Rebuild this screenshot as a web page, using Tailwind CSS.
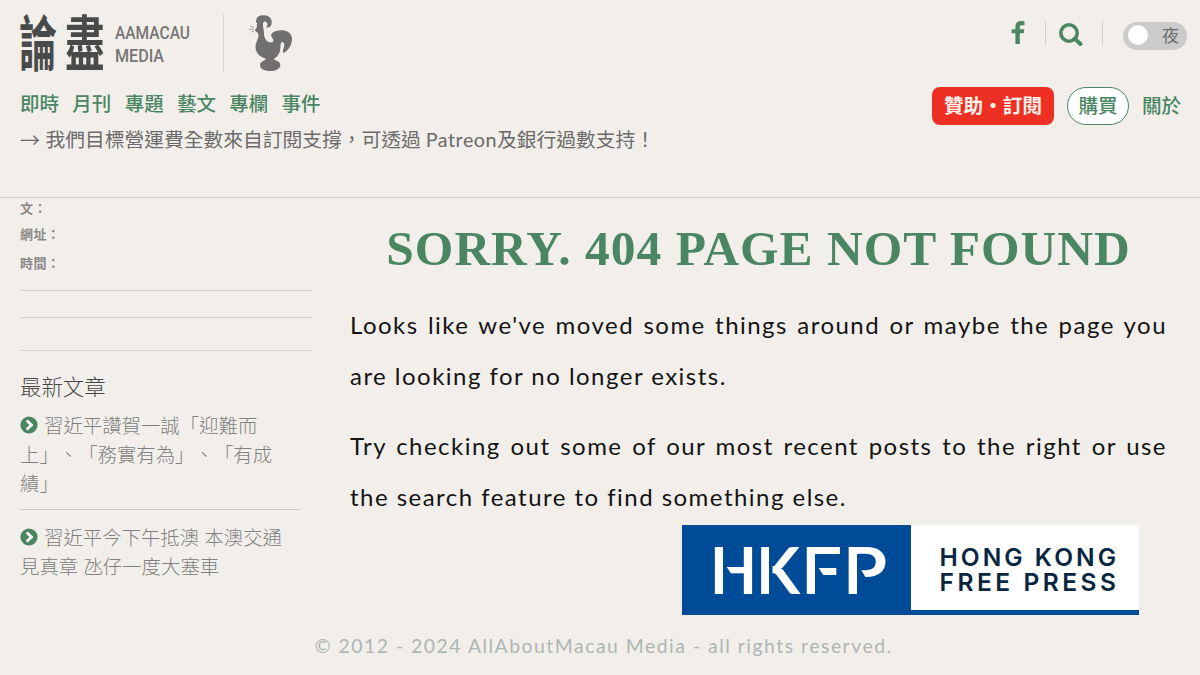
<!DOCTYPE html>
<html lang="zh-Hant">
<head>
<meta charset="utf-8">
<title>論盡媒體 AAMACAU MEDIA</title>
<script src="https://cdn.jsdelivr.net/npm/@tailwindcss/browser@4"></script>
</head>
<body class="w-[1200px] h-[675px] overflow-hidden bg-[#f2efea] font-[Lato,'Noto_Sans_CJK_TC',sans-serif] text-[#6b6b6b] [text-spacing-trim:space-all]">
<header class="h-[198px] border-b border-[#d3d1cc] pl-5 pr-[13px] flex flex-col">
  <div class="flex justify-between h-[84px] shrink-0">
    <svg class="w-[290px] h-[84px] block overflow-visible" viewBox="20 0 290 84">
      <g fill="#494b4a" font-family="'Noto Sans CJK TC'" font-weight="700" font-size="60">
        <text transform="translate(19.2 66.300) scale(.63 1)">論</text>
        <text transform="translate(65 66) scale(.66 1)">盡</text>
      </g>
      <g fill="#777575" font-family="Roboto" font-weight="500" font-size="18.5">
        <text x="115" y="38.5" textLength="75" lengthAdjust="spacingAndGlyphs">AAMACAU</text>
        <text x="115" y="61.5" textLength="49" lengthAdjust="spacingAndGlyphs">MEDIA</text>
      </g>
      <path d="M223.500 14V72" stroke="#d3d5d5"/>
      <g transform="scale(.33333)">
        <path fill="#716f70" d="M769 61C769 50 780 45 793 46C808 47 817 58 815 70C814 80 806 85 798 82C803 78 804 70 799 66C793 62 788 67 789 75C789 84 792 91 792 101C792 113 799 125 809 127C817 128 821 125 820 119C817 113 811 108 814 103C819 94 835 90 849 91C866 93 877 104 876 120C874 138 864 153 850 159C846 152 853 143 853 134C852 126 846 123 843 129C840 136 843 146 839 156C835 167 827 173 822 177C822 181 841 183 841 194C841 206 827 213 810 213C793 213 780 206 780 195C780 184 797 181 798 176C783 172 769 161 767 146C765 132 772 122 775 111C777 104 775 99 769 95L764 91L770 83C773 79 768 75 772 70C768 68 766 64 769 61Z"/>
        <path d="M750 78L762 84M748 88L761 88M752 97L762 92" stroke="#a9a7a5" stroke-width="3" fill="none"/>
      </g>
    </svg>
    <div class="flex items-start">
      <svg class="w-[14px] h-[24px] mt-[21px]" viewBox="0 0 14 24"><path fill="#4a8664" d="M13.5 .3V4.3H10.5C9.1 4.3 8.8 5 8.8 6.2V8.3H13.3L12.8 12.3H8.8V23H4.4V12.3H.6V8.3H4.4V5.700C4.4 2 6.600 .1 10 .1Z"/></svg>
      <div class="w-px h-6 bg-[#d0cecb] mt-[21px] ml-[20px]"></div>
      <svg class="w-[25px] h-[25px] mt-[22px] ml-[12px]" viewBox="0 0 25 25"><circle cx="11" cy="11" r="8.2" fill="none" stroke="#4a8664" stroke-width="3.6"/><path d="M16.6 16.6L22.5 22" stroke="#4a8664" stroke-width="4" stroke-linecap="round"/></svg>
      <div class="w-px h-6 bg-[#d0cecb] mt-[21px] ml-[19px]"></div>
      <div class="w-16 h-7 mt-[22px] ml-[20px] rounded-full bg-[#cbcbcb] flex items-center justify-between pl-[5px] pr-[8px]">
        <div class="size-5 rounded-full bg-white -mt-[3px]"></div>
        <span class="text-[17px] leading-7">夜</span>
      </div>
    </div>
  </div>
  <div class="flex justify-between h-[42px] shrink-0 text-[#4a8664] font-medium">
    <nav class="flex gap-[13.3px] pt-[5.5px] text-[19.5px] leading-[28px] whitespace-nowrap">
      <a>即時</a><a>月刊</a><a>專題</a><a>藝文</a><a>專欄</a><a>事件</a>
    </nav>
    <div class="flex pt-[3px] text-[19.6px] whitespace-nowrap">
      <a class="w-[122px] h-[38px] rounded-lg bg-[#ee3024] text-[#fff4ed] font-bold leading-[37px] text-center">贊助・訂閱</a>
      <a class="w-[62px] h-[38px] ml-[13px] rounded-full border border-[#4a8664] bg-white leading-[35px] text-center">購買</a>
      <a class="w-[39px] ml-[13px] mr-[6px] leading-[37px]">關於</a>
    </div>
  </div>
  <p class="text-[19.75px] leading-[28px] whitespace-nowrap flex"><span class="w-[25.5px] text-[20px] font-['Noto_Sans_CJK_TC']">→</span><span>我們目標營運費全數來自訂閱支撐，可透過 <span class="tracking-[0.5px]">Patreon</span>及銀行過數支持！</span></p>
</header>
<div class="flex h-[424px]">
  <aside class="w-[292px] ml-5 shrink-0">
    <div class="text-[13px] tracking-[0.4px] font-bold text-[#8a8987] leading-[20px] h-[92px]">
      <p class="h-[26px]">文：</p><p class="h-[29px]">網址：</p><p>時間：</p>
    </div>
    <div class="h-[61px] border-b border-[#d2d0cb]">
      <div class="h-[28px] border-y border-[#d2d0cb]"></div>
    </div>
    <h2 class="text-[21.4px] leading-[30px] mt-[21px] font-light text-[#474747]">最新文章</h2>
    <ul class="w-[280px] text-[19.4px] leading-[29px] font-light text-[#808080] pt-[9px]">
      <li class="h-[99px] border-b border-[#c8c6c2] whitespace-nowrap"><svg class="inline-block align-[-1px] w-[18px] h-[18px] mr-[6px]" viewBox="0 0 18 18"><circle cx="9" cy="9" r="8.6" fill="#4a8664"/><path d="M6.8 4.6L11.4 9L6.8 13.4" fill="none" stroke="#fff" stroke-width="2.8"/></svg>習近平讚賀一誠「迎難而<br>上」、「務實有為」、「有成<br>績」</li>
      <li class="pt-[13px] whitespace-nowrap"><svg class="inline-block align-[-1px] w-[18px] h-[18px] mr-[6px]" viewBox="0 0 18 18"><circle cx="9" cy="9" r="8.6" fill="#4a8664"/><path d="M6.8 4.6L11.4 9L6.8 13.4" fill="none" stroke="#fff" stroke-width="2.8"/></svg>習近平今下午抵澳 本澳交通<br>見真章 氹仔一度大塞車</li>
    </ul>
  </aside>
  <main class="ml-[38px] w-[817px] shrink-0">
    <h1 class="h-[101px] pt-[21px] font-['Liberation_Serif',serif] font-bold text-[49.5px] leading-[60px] tracking-[1px] text-center text-[#4a8664] whitespace-nowrap">SORRY. 404 PAGE NOT FOUND</h1>
    <div class="text-[24px] leading-[51px] text-[#141414] tracking-[1.47px]">
      <p class="mb-[19px]"><span class="block text-justify [text-align-last:justify] whitespace-nowrap">Looks like we've moved some things around or maybe the page you</span>are looking for no longer exists.</p>
      <p><span class="block text-justify [text-align-last:justify] whitespace-nowrap">Try checking out some of our most recent posts to the right or use</span>the search feature to find something else.</p>
    </div>
    <div class="ml-[332px] mt-[3px] w-[457px] h-[90px]">
      <svg class="block w-[457px] h-[90px]" viewBox="0 0 457 90">
        <path fill="#004b98" d="M0 0H457V90H0Z"/><path fill="#fff" d="M229 0H457V85H229Z"/>
        <g fill="#fff" font-family="Lato" font-weight="700" font-size="65">
          <text x="28" y="68.5" textLength="47" lengthAdjust="spacingAndGlyphs">H</text>
          <text x="74" y="68.5" textLength="44" lengthAdjust="spacingAndGlyphs">K</text>
          <text x="119" y="68.5" textLength="41" lengthAdjust="spacingAndGlyphs">F</text>
          <text x="161" y="68.5" textLength="44" lengthAdjust="spacingAndGlyphs">P</text>
        </g>
        <path fill="#004b98" d="M41 20H44V41L50 50H44V70H41ZM87 20H90.500V70H87ZM133 29H136V42L142 51H136V70H133ZM175 29H178V43L184 53H178V70H175Z"/>
        <g fill="#08263f" font-family="Inter" font-weight="600" font-size="24.500">
          <text x="257.5" y="41" textLength="176.500">HONG KONG</text>
          <text x="257.5" y="66" textLength="176.500">FREE PRESS</text>
        </g>
      </svg>
    </div>
  </main>
</div>
<footer class="pt-[10px] pl-[7px] text-center text-[19.4px] leading-[28px] tracking-[1.5px] text-[#adb5b3] whitespace-nowrap">© 2012 - 2024 AllAboutMacau Media - all rights reserved.</footer>
</body>
</html>
